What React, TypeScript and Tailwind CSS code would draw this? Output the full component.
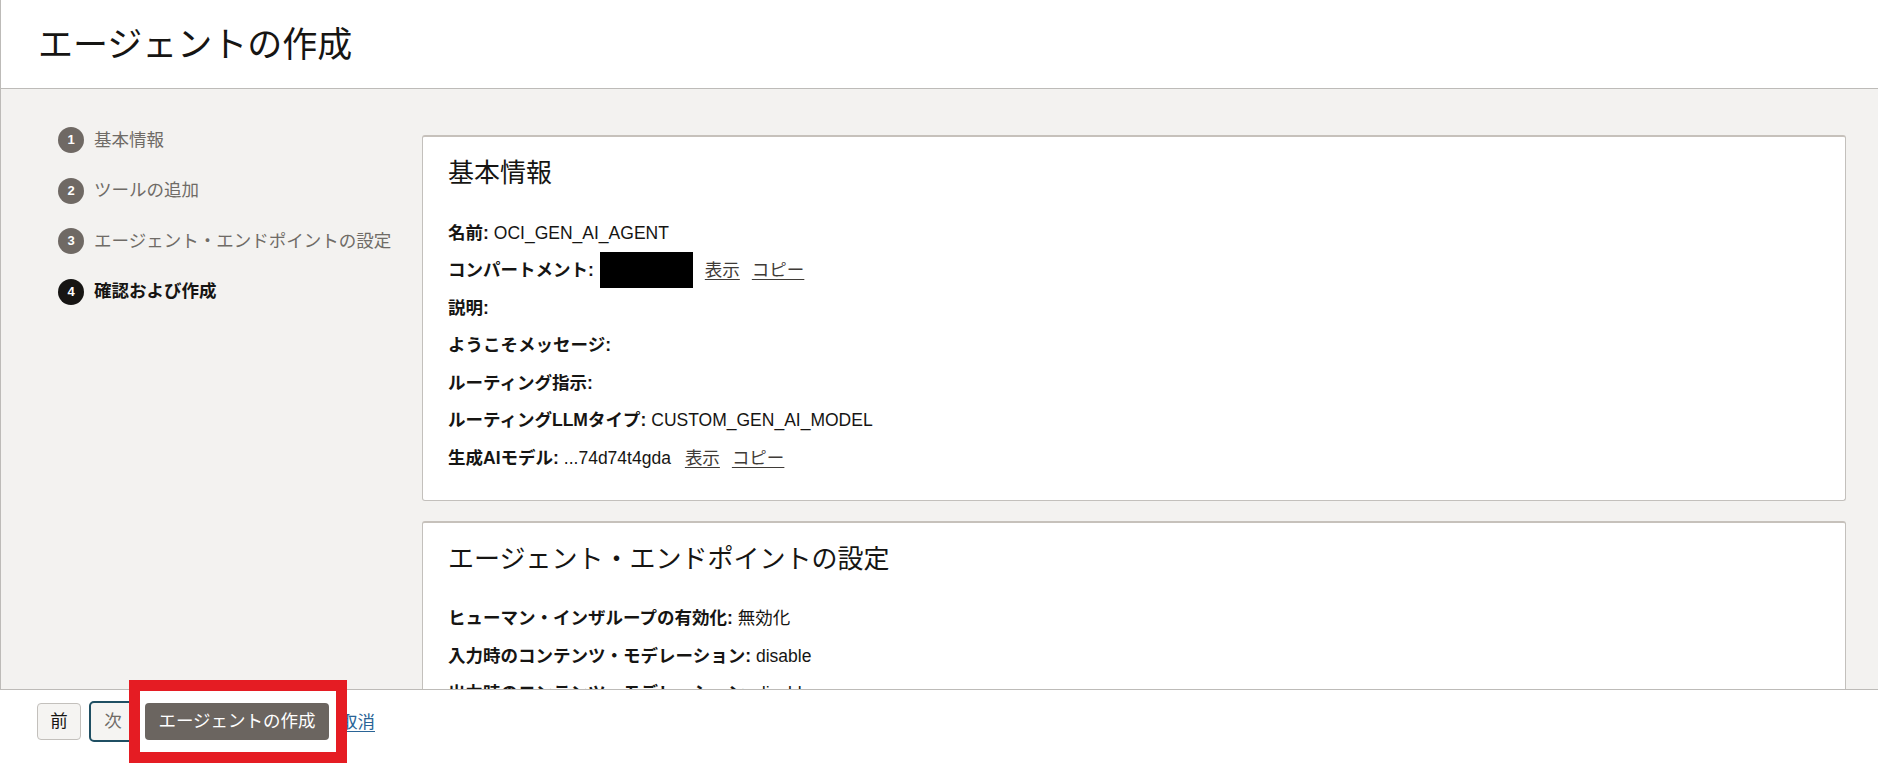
import React from "react";

interface StepProps {
  num: number;
  label: string;
  active?: boolean;
}

const steps: StepProps[] = [
  { num: 1, label: "基本情報" },
  { num: 2, label: "ツールの追加" },
  { num: 3, label: "エージェント・エンドポイントの設定" },
  { num: 4, label: "確認および作成", active: true },
];

const Link = ({ children }: { children: React.ReactNode }) => (
  <a className="text-[#3f3b37] underline underline-offset-[3px] decoration-[1px] cursor-pointer">{children}</a>
);

const Row = ({ label, children }: { label: string; children?: React.ReactNode }) => (
  <div className="flex h-[37.5px] items-center whitespace-nowrap">
    <span className="font-bold">{label}:</span>
    {children}
  </div>
);

const Card = ({ title, children }: { title: string; children: React.ReactNode }) => (
  <section className="rounded-[3px] border border-[#c3c0bc] border-t-[2px] border-t-[#c6c1bb] bg-white px-[25px] pt-[18px] pb-[23px]">
    <h2 className="h-[36px] text-[26px] leading-[36px] font-normal text-[#161513]">{title}</h2>
    <div className="mt-[23px]">{children}</div>
  </section>
);

export default function App() {
  return (
    <div className="relative flex h-[763px] w-[1878px] flex-col overflow-hidden bg-white text-[17.5px] text-[#161513] font-['Liberation_Sans','Noto_Sans_CJK_JP',sans-serif]">
      <header className="h-[89px] shrink-0 border-b border-l border-[#bdbbb8] bg-white pl-[37px]">
        <h1 className="pt-[23px] text-[35px] leading-[44px] font-normal">エージェントの作成</h1>
      </header>

      <main className="flex min-h-0 flex-1 overflow-hidden border-l border-[#bdbbb8] bg-[#f3f2f0]">
        <nav className="w-[421px] shrink-0 pl-[57px] pt-[38px]">
          <ol className="flex flex-col gap-[24.5px]">
            {steps.map((s) => (
              <li key={s.num} className="flex h-[26px] items-center gap-[10px]">
                <span
                  className={
                    s.active
                      ? "flex h-[26px] w-[26px] items-center justify-center rounded-full bg-[#161513] text-[13px] font-bold text-white"
                      : "flex h-[26px] w-[26px] items-center justify-center rounded-full bg-[#6f6964] text-[13px] font-bold text-white"
                  }
                >
                  {s.num}
                </span>
                <span className={s.active ? "font-bold text-[#161513]" : "text-[#6f6b66]"}>{s.label}</span>
              </li>
            ))}
          </ol>
        </nav>

        <div className="flex min-w-0 flex-1 flex-col gap-[20px] pt-[46px] pr-[32px]">
          <Card title="基本情報">
            <Row label="名前">
              <span className="ml-[5px]">OCI_GEN_AI_AGENT</span>
            </Row>
            <Row label="コンパートメント">
              <span className="ml-[6px] inline-block h-[36px] w-[93px] bg-black" />
              <span className="ml-[12px]">
                <Link>表示</Link>
              </span>
              <span className="ml-[12px]">
                <Link>コピー</Link>
              </span>
            </Row>
            <Row label="説明" />
            <Row label="ようこそメッセージ" />
            <Row label="ルーティング指示" />
            <Row label="ルーティングLLMタイプ">
              <span className="ml-[5px]">CUSTOM_GEN_AI_MODEL</span>
            </Row>
            <Row label="生成AIモデル">
              <span className="ml-[5px]">...74d74t4gda</span>
              <span className="ml-[14px]">
                <Link>表示</Link>
              </span>
              <span className="ml-[12px]">
                <Link>コピー</Link>
              </span>
            </Row>
          </Card>

          <Card title="エージェント・エンドポイントの設定">
            <Row label="ヒューマン・インザループの有効化">
              <span className="ml-[5px]">無効化</span>
            </Row>
            <Row label="入力時のコンテンツ・モデレーション">
              <span className="ml-[5px]">disable</span>
            </Row>
            <Row label="出力時のコンテンツ・モデレーション">
              <span className="ml-[5px]">disable</span>
            </Row>
          </Card>
        </div>
      </main>

      <footer className="flex h-[74px] shrink-0 items-start gap-[8px] border-t border-[#bdbbb8] bg-white pl-[37px] pt-[13px]">
        <button className="h-[37px] w-[44px] rounded-[4px] border border-[#c3c0bc] bg-[#f5f4f2] text-[17.5px] text-[#161513]">前</button>
        <button className="-mt-[2px] h-[41px] w-[48px] rounded-[5px] border-[2px] border-[#1f4f63] bg-[#f5f4f2] text-[17.5px] text-[#6f6b66]">次</button>
        <button className="h-[37px] w-[184px] rounded-[4px] bg-[#6b6560] text-[17.5px] text-white">エージェントの作成</button>
        <a className="ml-[3px] mt-[6px] cursor-pointer text-[#2a6496] underline underline-offset-[3px]">取消</a>
      </footer>

      <div className="pointer-events-none absolute left-[129px] top-[680px] h-[83px] w-[218px] border-[11px] border-[#e51c23]" />
    </div>
  );
}
